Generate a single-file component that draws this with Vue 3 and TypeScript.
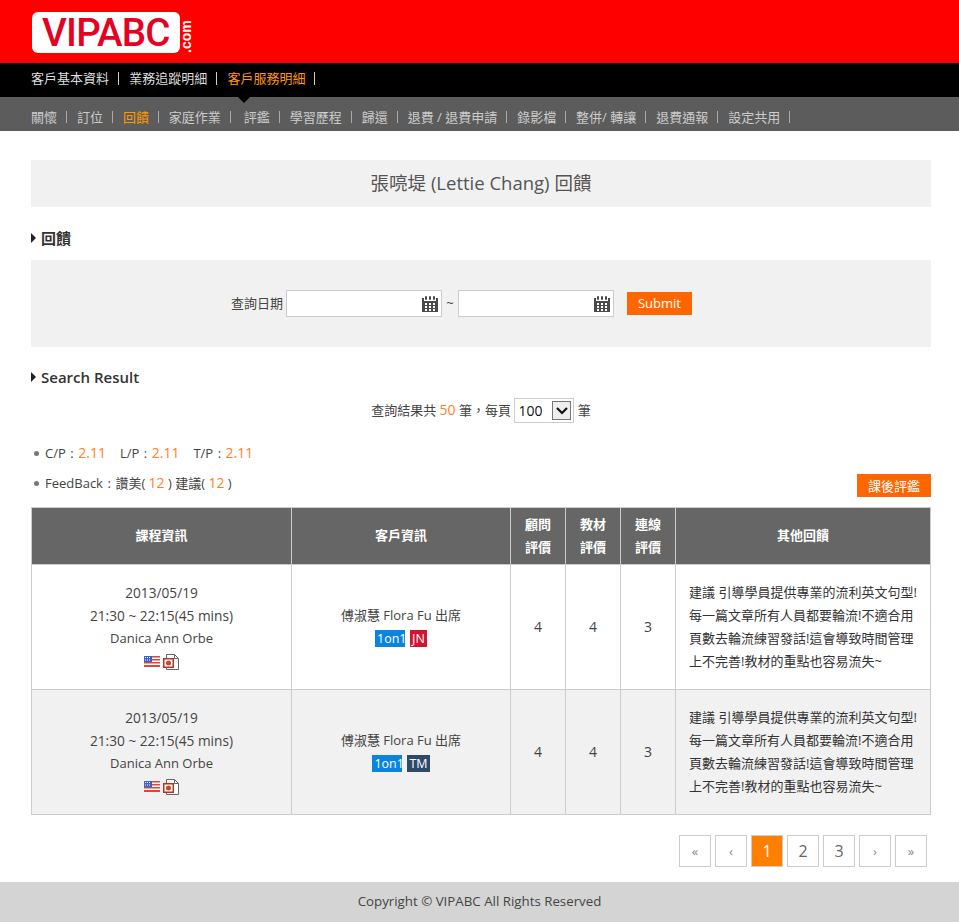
<script setup lang="ts">
const mainNav = ['客戶基本資料', '業務追蹤明細', '客戶服務明細']
const subNav = ['關懷', '訂位', '回饋', '家庭作業', '評鑑', '學習歷程', '歸還', '退費 / 退費申請', '錄影檔', '整併/ 轉讓', '退費通報', '設定共用']
const comment = [
  '建議 引導學員提供專業的流利英文句型!',
  '每一篇文章所有人員都要輪流!不適合用',
  '頁數去輪流練習發話!這會導致時間管理',
  '上不完善!教材的重點也容易流失~',
]
const rows = [
  { tag: 'JN', tagClass: 'tag-red' },
  { tag: 'TM', tagClass: 'tag-navy' },
]
const pages = ['«', '‹', '1', '2', '3', '›', '»']
const calendarCells = [3, 7, 11].flatMap((x) => [7, 10, 13].map((y) => ({ x, y })))
const calendarRings = [3, 7, 11]
</script>

<template>
  <div class="page">
    <header class="top">
      <div class="logo">
        <span class="logo-box">VIPABC</span>
        <span class="logo-com">.com</span>
      </div>
    </header>

    <nav class="main-nav">
      <a v-for="(item, i) in mainNav" :key="item" :class="{ on: i === 2 }">{{ item }}</a>
      <span class="notch"></span>
    </nav>
    <nav class="sub-nav">
      <a v-for="(item, i) in subNav" :key="item" :class="{ on: i === 2, wide: i === 4 }">{{ item }}</a>
    </nav>

    <main class="content">
      <h1 class="title">張喨堤 (Lettie Chang) 回饋</h1>

      <h2 class="heading first">回饋</h2>
      <form class="filter" @submit.prevent>
        <label>查詢日期</label>
        <div v-for="n in 2" :key="n" class="date-group">
          <span v-if="n === 2" class="tilde">~</span>
          <div class="date">
            <svg width="16" height="16" viewBox="0 0 16 16">
              <path fill="#4a4a4a" d="M0 2h16v14H0z" />
              <g v-for="x in calendarRings" :key="x">
                <rect :x="x - 1" y="2" width="4" height="3" fill="#fff" />
                <rect :x="x" y="0" width="2" height="4" rx="1" fill="#4a4a4a" />
              </g>
              <rect v-for="c in calendarCells" :key="c.x + '-' + c.y" :x="c.x" :y="c.y" width="2" height="2" fill="#fff" />
            </svg>
          </div>
        </div>
        <button class="btn submit" type="submit">Submit</button>
      </form>

      <h2 class="heading second">Search Result</h2>
      <div class="count">
        查詢結果共 <em>50</em> 筆，每頁
        <span class="select-wrap">
          <select><option>100</option></select>
          <span class="select-arrow">
            <svg width="12" height="8" viewBox="0 0 12 8"><path d="M1 1l5 5 5-5" fill="none" stroke="#111" stroke-width="2.2" /></svg>
          </span>
        </span>
        筆
      </div>

      <div class="stat scores">
        C/P<span class="colon">:</span><em>2.11</em><span class="sp"></span>L/P<span class="colon">:</span><em>2.11</em><span class="sp"></span>T/P<span class="colon">:</span><em>2.11</em>
      </div>
      <div class="feedback-row">
        <div class="stat">FeedBack<span class="colon">:</span>讚美( <em>12</em> ) 建議( <em>12</em> )</div>
        <button class="btn review" type="button">課後評鑑</button>
      </div>

      <table class="grid">
        <colgroup>
          <col style="width: 260px" /><col style="width: 219px" /><col style="width: 55px" />
          <col style="width: 55px" /><col style="width: 55px" /><col />
        </colgroup>
        <thead>
          <tr>
            <th>課程資訊</th>
            <th>客戶資訊</th>
            <th>顧問<br />評價</th>
            <th>教材<br />評價</th>
            <th>連線<br />評價</th>
            <th>其他回饋</th>
          </tr>
        </thead>
        <tbody>
          <tr v-for="row in rows" :key="row.tag">
            <td>
              <div class="num">2013/05/19</div>
              <div class="num">21:30 ~ 22:15(45 mins)</div>
              <div>Danica Ann Orbe</div>
              <div class="icons">
                <svg width="16" height="11" viewBox="0 0 16 11">
                  <rect width="16" height="11" fill="#fff" />
                  <path fill="#e2443a" d="M0 0h16v1.500H0zM0 3h16v1.500H0zM0 6h16v1.500H0zM0 9h16v2H0z" />
                  <rect width="8" height="6" fill="#3f5fc0" />
                  <path stroke="#fff" stroke-dasharray="1 1" d="M1 1.500h6M1 4h6" />
                </svg>
                <svg width="16" height="16" viewBox="0 0 16 16">
                  <path fill="#fff" stroke="#666" d="M3.500.5h8l4 4v11h-12z" />
                  <path fill="none" stroke="#666" d="M11.500.5v4h4" />
                  <rect x="0" y="4" width="11" height="10" fill="#b5351c" />
                  <rect x="1.500" y="5.500" width="8" height="7" fill="#fff" />
                  <circle cx="5.500" cy="9" r="2.500" fill="#c4472a" />
                </svg>
              </div>
            </td>
            <td>
              <div>傅淑慧 Flora Fu 出席</div>
              <div class="tags"><span class="tag tag-blue">1on1</span><span class="tag" :class="row.tagClass">{{ row.tag }}</span></div>
            </td>
            <td class="score">4</td>
            <td class="score">4</td>
            <td class="score">3</td>
            <td class="comment">
              <div v-for="line in comment" :key="line">{{ line }}</div>
            </td>
          </tr>
        </tbody>
      </table>

      <div class="pager">
        <a v-for="p in pages" :key="p" :class="{ on: p === '1', mark: isNaN(Number(p)) }">{{ p }}</a>
      </div>
    </main>

    <footer class="foot">Copyright © VIPABC All Rights Reserved</footer>
  </div>
</template>

<style>
body {
  margin: 0;
  background: #fff;
}
</style>

<style scoped>
.page {
  font-family: "Open Sans", "Noto Sans CJK TC", sans-serif;
  font-size: 13px;
  color: #444;
}

.top {
  height: 63px;
  background: #f00;
  padding: 12px 0 0 32px;
  box-sizing: border-box;
}

.logo {
  display: flex;
  align-items: flex-start;
}

.logo-box {
  width: 148px;
  height: 41px;
  box-sizing: border-box;
  padding-left: 10px;
  background: #fff;
  border-radius: 6px;
  color: #e60023;
  font: 500 38.500px/41px Roboto, sans-serif;
  letter-spacing: -0.8px;
  white-space: nowrap;
}

.logo-com {
  writing-mode: vertical-rl;
  transform: rotate(180deg);
  color: #fff;
  font: 700 14px/10px "Liberation Sans", sans-serif;
  height: 36px;
  margin: 5px 0 0 1px;
}

.main-nav {
  position: relative;
  height: 34px;
  box-sizing: border-box;
  padding: 0 0 3px 31px;
  background: #000;
  display: flex;
  align-items: center;
}

.main-nav a {
  color: #ddd;
  line-height: 13px;
  padding-right: 9px;
  margin-right: 10.200px;
  border-right: 1px solid #ccc;
}

.main-nav a.on,
.sub-nav a.on {
  color: #f90;
}

.notch {
  position: absolute;
  left: 238px;
  bottom: -6px;
  border: 6px solid transparent;
  border-bottom: 0;
  border-top-color: #000;
  z-index: 1;
}

.sub-nav {
  height: 34px;
  box-sizing: border-box;
  padding: 6px 0 0 31px;
  background: #5c5c5c;
  display: flex;
  align-items: center;
}

.sub-nav a {
  color: #ccc;
  line-height: 12px;
  padding-right: 9px;
  margin-right: 9.950px;
  border-right: 1px solid #aaa;
}

.sub-nav a.wide {
  margin-left: 3px;
}

.content {
  padding: 29px 28px 15px 31px;
}

.title {
  margin: 0;
  height: 47px;
  width: 900px;
  background: #f1f1f1;
  font-size: 18.500px;
  font-weight: 400;
  line-height: 46px;
  text-align: center;
  color: #555;
}

.heading {
  position: relative;
  margin: 0;
  padding-left: 10px;
  font-size: 15px;
  font-weight: 600;
  line-height: 20px;
  color: #333;
}

.heading::before {
  content: "";
  position: absolute;
  left: 0;
  top: 5px;
  border: 5px solid transparent;
  border-right: 0;
  border-left-color: #222;
}

.heading.first {
  margin-top: 21px;
}

.heading.second {
  margin-top: 20px;
}

.filter {
  width: 900px;
  height: 87px;
  margin-top: 12px;
  background: #f1f1f1;
  display: flex;
  justify-content: center;
  align-items: flex-start;
  padding: 30px 39px 0 0;
  box-sizing: border-box;
}

.filter label {
  line-height: 27px;
  margin-right: 3px;
}

.date-group {
  display: flex;
}

.date {
  width: 156px;
  height: 27px;
  box-sizing: border-box;
  border: 1px solid #ccc;
  background: #fff;
  display: flex;
  justify-content: flex-end;
  align-items: center;
  padding-right: 3px;
}

.tilde {
  width: 16px;
  text-align: center;
  line-height: 27px;
}

.btn {
  border: 0;
  color: #fff;
  background: #f60;
  font: inherit;
  padding: 0;
}

.submit {
  width: 65px;
  height: 23px;
  margin: 2px 0 0 13px;
  padding-bottom: 2px;
}

.count {
  margin-top: 11px;
  height: 25px;
  width: 900px;
  text-align: center;
  line-height: 24px;
}

em {
  font-style: normal;
  color: #ff7f27;
  font-size: 14px;
}

.select-wrap {
  position: relative;
  display: inline-block;
  vertical-align: top;
  height: 25px;
}

select {
  appearance: none;
  width: 60px;
  height: 25px;
  box-sizing: border-box;
  border: 1px solid #ccc;
  border-radius: 0;
  background: #fff;
  color: #111;
  font: 14px "Open Sans", sans-serif;
  padding-left: 3px;
  display: block;
}

.select-arrow {
  position: absolute;
  top: 3px;
  right: 3px;
  width: 17px;
  height: 17px;
  border: 1px solid #777;
  background: #eee;
  display: flex;
  align-items: center;
  justify-content: center;
}

.stat {
  position: relative;
  padding-left: 14px;
  line-height: 20px;
}

.stat::before {
  content: "";
  position: absolute;
  left: 3px;
  top: 8px;
  width: 5px;
  height: 5px;
  border-radius: 50%;
  background: #777;
}

.colon {
  margin: 0 4.500px;
}

.scores {
  margin-top: 20px;
}

.sp {
  display: inline-block;
  width: 14px;
}

.feedback-row {
  width: 900px;
  margin-top: 10px;
  display: flex;
  justify-content: space-between;
  align-items: flex-start;
}

.review {
  width: 74px;
  height: 23px;
  margin-top: 1px;
}

.grid {
  width: 900px;
  margin-top: 10px;
  border-collapse: collapse;
  table-layout: fixed;
  text-align: center;
}

.grid th,
.grid td {
  border: 1px solid #ccc;
  padding: 0;
}

.grid th {
  height: 55px;
  padding-bottom: 1px;
  background: #666;
  color: #fff;
  font-weight: 600;
  line-height: 23px;
  border-color: #ccc;
}

.grid td {
  height: 124px;
  line-height: 23px;
}

.grid td .num {
  font-size: 13.700px;
}

.grid td.score {
  height: 122px;
  font-size: 14px;
  padding-bottom: 2px;
}

.grid tbody tr:nth-child(2) td {
  background: #f1f1f1;
}

.icons {
  height: 24px;
  display: flex;
  justify-content: center;
  align-items: center;
  gap: 3px;
}

.tags {
  display: flex;
  justify-content: center;
  gap: 5px;
  margin: 3px 0;
}

.tag {
  height: 17px;
  line-height: 17px;
  padding: 0 2px;
  color: #fff;
  font-size: 12.500px;
}

.tag-blue {
  background: #0a84dc;
  width: 26px;
}

.tag-red {
  background: #d01432;
  min-width: 13px;
}

.tag-navy {
  background: #2e4a6b;
  min-width: 13px;
}

.grid td.comment {
  text-align: left;
  padding-left: 13px;
  white-space: nowrap;
  line-height: 23px;
  color: #333;
}

.pager {
  width: 896px;
  margin-top: 20px;
  display: flex;
  justify-content: flex-end;
  gap: 4px;
}

.pager a {
  width: 32px;
  height: 32px;
  box-sizing: border-box;
  border: 1px solid #ccc;
  text-align: center;
  line-height: 30px;
  font-size: 16px;
  color: #666;
}

.pager a.mark {
  color: #888;
  font-size: 13px;
}

.pager a.on {
  background: #ff7f00;
  color: #fff;
}

.foot {
  height: 40px;
  background: #d4d4d4;
  line-height: 39px;
  font-size: 13.300px;
  text-align: center;
  color: #444;
}
</style>
